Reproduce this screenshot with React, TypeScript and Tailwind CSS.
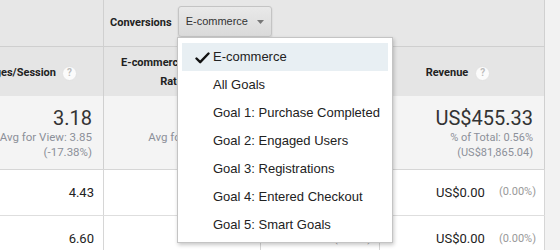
import React from "react";

const roboto = { fontFamily: "Roboto, 'Liberation Sans', Arial, sans-serif" };
const arial = { fontFamily: "'Liberation Sans', Arial, sans-serif" };

function Help() {
  return (
    <span className="inline-flex shrink-0 items-center justify-center w-[15px] h-[15px] rounded-full bg-[#fbfbfb] border border-[#e2e2e2] text-[#bdbdbd] text-[10px] font-bold leading-none">
      ?
    </span>
  );
}

const menuItems = [
  "E-commerce",
  "All Goals",
  "Goal 1: Purchase Completed",
  "Goal 2: Engaged Users",
  "Goal 3: Registrations",
  "Goal 4: Entered Checkout",
  "Goal 5: Smart Goals",
];

export default function App() {
  return (
    <div className="relative w-[560px] h-[250px] overflow-hidden bg-[#f2f2f2] flex" style={roboto}>
      <div className="w-[545px] shrink-0 flex flex-col">
        {/* top band */}
        <div className="flex h-[47px] shrink-0 bg-[#e7e7e7] border-b border-[#cfcfcf]">
          <div className="w-[104px] shrink-0 border-r border-[#d0d0d0]" />
          <div className="flex items-center pl-[6px] gap-[6px] border-r border-[#d0d0d0] flex-1">
            <span className="text-[11px] font-bold text-[#222]">Conversions</span>
            <div
              className="mb-[3px] flex items-center w-[94px] h-[31px] rounded-[3px] border border-[#c4c4c4] bg-gradient-to-b from-[#e9e9e9] to-[#dadada] shadow-[0_1px_2px_rgba(0,0,0,0.14)] pl-[7px] pr-[7px]"
              style={arial}
            >
              <span className="text-[11px] text-[#333]">E-commerce</span>
              <svg className="ml-auto" width="7" height="4" viewBox="0 0 7 4">
                <path d="M0 0 L7 0 L3.5 4 Z" fill="#777" />
              </svg>
            </div>
          </div>
        </div>

        {/* header row */}
        <div className="flex h-[49px] shrink-0 bg-[#e5e5e5]">
          <div className="w-[104px] shrink-0 border-r border-[#d0d0d0] flex items-center justify-end pr-[26px] pt-[3px] overflow-hidden">
            <div className="flex items-center gap-[6px] whitespace-nowrap shrink-0">
              <span className="text-[11px] font-bold text-[#222]">Pages/Session</span>
              <Help />
            </div>
          </div>
          <div className="w-[157px] shrink-0 border-r border-[#d0d0d0] flex flex-col items-center justify-center text-[11px] font-bold text-[#222] leading-[19px] pt-[1px]">
            <span>E-commerce Conversion</span>
            <span className="flex items-center gap-[6px]">
              Rate <Help />
            </span>
          </div>
          <div className="w-[119px] shrink-0 border-r border-[#d0d0d0] flex items-center justify-center gap-[6px] pt-[3px]">
            <span className="text-[11px] font-bold text-[#222]">Transactions</span>
            <Help />
          </div>
          <div className="w-[165px] shrink-0 border-r border-[#d0d0d0] flex items-center justify-center gap-[7px] pt-[3px] pr-[8px]">
            <span className="text-[11px] font-bold text-[#222]">Revenue</span>
            <Help />
          </div>
        </div>

        {/* summary row */}
        <div className="flex h-[74px] shrink-0 bg-[#f4f4f4] border-b border-[#d6d6d6]">
          <div className="w-[104px] shrink-0 border-r border-[#d0d0d0] flex flex-col items-end pr-[11px] pt-[10px]">
            <span className="text-[20px] leading-[24px] text-[#333]">3.18</span>
            <span className="text-[11.5px] leading-[15px] text-[#8c9099] whitespace-nowrap">Avg for View: 3.85</span>
            <span className="text-[11.5px] leading-[15px] text-[#8c9099]">(-17.38%)</span>
          </div>
          <div className="w-[157px] shrink-0 border-r border-[#d0d0d0] flex flex-col items-end pr-[11px] pt-[10px]">
            <span className="text-[20px] leading-[24px] text-[#333]">0.12%</span>
            <span className="text-[11.5px] leading-[15px] text-[#8c9099] whitespace-nowrap">Avg for View: 0.02%</span>
            <span className="text-[11.5px] leading-[15px] text-[#8c9099]">(480.15%)</span>
          </div>
          <div className="w-[119px] shrink-0 border-r border-[#d0d0d0] flex flex-col items-end pr-[11px] pt-[10px]">
            <span className="text-[20px] leading-[24px] text-[#333]">7</span>
            <span className="text-[11px] leading-[15px] text-[#8c9099] whitespace-nowrap">% of Total: 0.56%</span>
            <span className="text-[11px] leading-[15px] text-[#8c9099]">(1,254)</span>
          </div>
          <div className="w-[165px] shrink-0 border-r border-[#d0d0d0] flex flex-col items-end pr-[11px] pt-[10px]">
            <span className="text-[20px] leading-[24px] text-[#333]">US$455.33</span>
            <span className="text-[11px] leading-[15px] text-[#8c9099] whitespace-nowrap">% of Total: 0.56%</span>
            <span className="text-[11px] leading-[15px] text-[#8c9099]">(US$81,865.04)</span>
          </div>
        </div>

        {/* data rows */}
        {["4.43", "6.60"].map((v, i) => (
          <div key={v} className={`flex h-[46px] shrink-0 bg-white ${i === 0 ? "border-b border-[#dedede]" : ""}`}>
            <div className="w-[104px] shrink-0 border-r border-[#d6d6d6] flex items-center justify-end pr-[9px]">
              <span className="text-[13px] text-[#222]">{v}</span>
            </div>
            <div className="w-[157px] shrink-0 border-r border-[#d6d6d6] flex items-center justify-end pr-[9px]">
              <span className="text-[13px] text-[#222]">0.00%</span>
            </div>
            <div className="w-[119px] shrink-0 border-r border-[#d6d6d6] flex items-center justify-end pr-[8px] gap-[12px]">
              <span className="text-[13px] text-[#222]">0</span>
              <span className="text-[11px] text-[#999]">(0.00%)</span>
            </div>
            <div className="w-[165px] shrink-0 border-r border-[#d6d6d6] flex items-center justify-end pr-[8px] gap-[14px]">
              <span className="text-[13px] text-[#222]">US$0.00</span>
              <span className="text-[11px] text-[#999]">(0.00%)</span>
            </div>
          </div>
        ))}
      </div>

      {/* dropdown menu */}
      <div
        className="absolute left-[177px] top-[37px] w-[216px] bg-white border border-[#c4c4c4] shadow-[1px_2px_4px_rgba(0,0,0,0.22)] px-[4px] pt-[5px] pb-[3px]"
        style={arial}
      >
        {menuItems.map((m, i) => (
          <div
            key={m}
            className={`relative h-[28px] flex items-center pl-[31px] text-[13px] text-[#222] ${i === 0 ? "bg-[#e8eff3]" : ""}`}
          >
            {i === 0 && (
              <svg className="absolute left-[13px] top-[9px]" width="15" height="12" viewBox="0 0 15 12">
                <path d="M1.5 6.5 L5.2 10.2 L13.5 1.5" fill="none" stroke="#111" strokeWidth="2.4" strokeLinecap="round" strokeLinejoin="round" />
              </svg>
            )}
            {m}
          </div>
        ))}
      </div>
    </div>
  );
}
